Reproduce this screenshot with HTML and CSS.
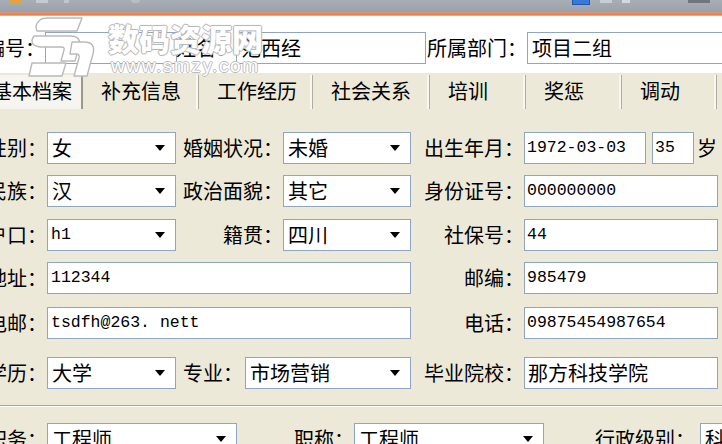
FILE: index.html
```html
<!DOCTYPE html>
<html lang="zh-CN">
<head>
<meta charset="utf-8">
<title>员工档案</title>
<link rel="stylesheet" href="styles.css">
</head>
<body>
<div class="titlebar">
  <span class="tb-ico tb-orange"></span>
  <span class="tb-ico tb-grey1"></span>
  <span class="tb-ico tb-grey2"></span>
  <span class="tb-ico tb-grey3"></span>
  <span class="tb-ico tb-blue"></span>
  <span class="tb-ico tb-grey4"></span>
  <span class="tb-ico tb-grey5"></span>
  <span class="tb-ico tb-dark"></span>
</div>
<div class="accent"></div>

<div class="header">
  <div class="row shift">
    <div class="lab l-id">编号：</div>
    <div class="box f-id"></div>
    <div class="lab l-name">姓名：</div>
    <div class="box f-name"><span class="cjk">范西经</span></div>
    <div class="lab l-dept">所属部门：</div>
    <div class="box f-dept"><span class="cjk">项目二组</span></div>
  </div>
</div>

<div class="tabs shift">
  <div class="tab tab-active t-basic">基本档案</div>
  <div class="tab t-116">补充信息</div>
  <div class="tab t-114">工作经历</div>
  <div class="tab t-117">社会关系</div>
  <div class="tab t-96">培训</div>
  <div class="tab t-96">奖惩</div>
  <div class="tab t-95">调动</div>
  <div class="tab t-rest"></div>
</div>

<div class="panel shift">
  <div class="row">
    <div class="lab c1">性别：</div>
    <div class="box sel s-short"><span class="cjk">女</span><span class="caret"></span></div>
    <div class="lab c2">婚姻状况：</div>
    <div class="box sel s-mid"><span class="cjk">未婚</span><span class="caret"></span></div>
    <div class="lab c3">出生年月：</div>
    <div class="box f-date"><span class="mono">1972-03-03</span></div>
    <div class="box f-age"><span class="mono">35</span></div>
    <div class="unit">岁</div>
  </div>
  <div class="row gap11">
    <div class="lab c1">民族：</div>
    <div class="box sel s-short"><span class="cjk">汉</span><span class="caret"></span></div>
    <div class="lab c2">政治面貌：</div>
    <div class="box sel s-mid"><span class="cjk">其它</span><span class="caret"></span></div>
    <div class="lab c3">身份证号：</div>
    <div class="box f-wide3"><span class="mono">000000000</span></div>
  </div>
  <div class="row gap12">
    <div class="lab c1">户口：</div>
    <div class="box sel s-short"><span class="mono">h1</span><span class="caret"></span></div>
    <div class="lab c2">籍贯：</div>
    <div class="box sel s-mid"><span class="cjk">四川</span><span class="caret"></span></div>
    <div class="lab c3">社保号：</div>
    <div class="box f-wide3"><span class="mono">44</span></div>
  </div>
  <div class="row gap11">
    <div class="lab c1">地址：</div>
    <div class="box f-wide1"><span class="mono">112344</span></div>
    <div class="lab c3">邮编：</div>
    <div class="box f-wide3"><span class="mono">985479</span></div>
  </div>
  <div class="row gap13">
    <div class="lab c1">电邮：</div>
    <div class="box f-wide1"><span class="mono">tsdfh@263. nett</span></div>
    <div class="lab c3">电话：</div>
    <div class="box f-wide3"><span class="mono">09875454987654</span></div>
  </div>
  <div class="row gap18">
    <div class="lab c1">学历：</div>
    <div class="box sel s-short"><span class="cjk">大学</span><span class="caret"></span></div>
    <div class="lab c2b">专业：</div>
    <div class="box sel s-major"><span class="cjk">市场营销</span><span class="caret"></span></div>
    <div class="lab c3">毕业院校：</div>
    <div class="box f-wide3"><span class="cjk">那方科技学院</span></div>
  </div>
  <div class="groove"></div>
  <div class="row gap16">
    <div class="lab c1">职务：</div>
    <div class="box sel s-job"><span class="cjk">工程师</span><span class="caret"></span></div>
    <div class="lab c-title">职称：</div>
    <div class="box sel s-job"><span class="cjk">工程师</span><span class="caret"></span></div>
    <div class="lab c-rank">行政级别：</div>
    <div class="box f-rank"><span class="cjk">科</span></div>
  </div>
</div>

<div class="watermark">
  <svg class="wm-logo" width="100" height="80" viewBox="0 0 100 80">
    <g fill="#ffffff" stroke="#b9b9b9" stroke-width="1.4" stroke-linejoin="round">
      <path d="M14 3 Q16 1 22 1 H56 L51 14 H11 Q8 8 14 3 Z"/>
      <path d="M8 19 H44 Q56 19 53 30 L49 44 H35 L38 33 Q39 30 35 30 H14 Q2 28 8 19 Z"/>
      <path d="M6 46 H40 L36 59 H3 Z"/>
      <path d="M46 25 H58 Q70 25 67 37 L61 59 H48 L53 41 Q54 37 50 37 H44 Z"/>
    </g>
  </svg>
  <div class="wm-title">数码资源网</div>
  <div class="wm-url">www.smzy.com</div>
</div>
</body>
</html>
```

FILE: styles.css
```css
html, body {
  margin: 0;
  padding: 0;
}

body {
  width: 722px;
  height: 444px;
  overflow: hidden;
  position: relative;
  background: #ece9d8;
  color: #000;
  font-family: "Noto Sans CJK SC", "Liberation Sans", sans-serif;
  font-size: 20px;
  line-height: 1;
}

/* top window strip */
.titlebar {
  height: 12px;
  background: linear-gradient(#a7aeb5, #9aa1a8);
  display: flex;
  align-items: flex-start;
}
.tb-ico { display: block; flex: none; }
.tb-orange { width: 12px; height: 4px; margin-left: 10px; background: #e6a23e; }
.tb-grey1 { width: 12px; height: 3px; margin-left: 14px; background: #c5cad0; }
.tb-grey2 { width: 5px; height: 3px; margin-left: 16px; background: #c0c5cb; }
.tb-grey3 { width: 9px; height: 3px; margin-left: 62px; background: #b9bec4; border-radius: 0 0 5px 5px; }
.tb-blue { width: 16px; height: 4px; margin-left: 432px; background: #3a78d8; border: 1px solid #2256b0; border-top: 0; }
.tb-grey4 { width: 12px; height: 3px; margin-left: 10px; background: #c9ced3; }
.tb-grey5 { width: 8px; height: 3px; margin-left: 10px; background: #d4d8dc; }
.tb-dark { width: 22px; height: 3px; margin-left: 58px; background: #6f767d; }

.accent {
  height: 4px;
  background: linear-gradient(#c99e8a, #ec7c48 60%, #f2b596);
}

.shift { margin-left: -12px; }

/* header row */
.header {
  background: #fff;
  height: 57px;
  box-sizing: border-box;
  padding-top: 16px;
}

.row {
  display: flex;
  align-items: center;
  height: 32px;
}

.lab {
  flex: none;
  display: flex;
  justify-content: flex-end;
  align-items: center;
  white-space: nowrap;
  height: 32px;
  box-sizing: border-box;
}

.box {
  flex: none;
  height: 32px;
  box-sizing: border-box;
  border: 1px solid #8ea6c1;
  background: #fff;
  display: flex;
  align-items: center;
  padding-left: 4px;
  white-space: nowrap;
  overflow: hidden;
}

.cjk {
  font-family: "Noto Sans CJK SC", sans-serif;
  font-size: 20px;
}

.mono {
  font-family: "Liberation Mono", "Noto Sans CJK SC", monospace;
  font-size: 16.5px;
  margin-left: -1px;
}

.sel {
  justify-content: space-between;
  padding-right: 10px;
}

.caret {
  flex: none;
  width: 0;
  height: 0;
  border-left: 5px solid transparent;
  border-right: 5px solid transparent;
  border-top: 6px solid #000;
}

/* header widths */
.l-id { width: 57px; }
.f-id { width: 132px; }
.l-name { width: 59px; }
.f-name { width: 190px; }
.l-dept { width: 101px; }
.f-dept { width: 240px; }

/* tabs */
.tabs {
  display: flex;
  height: 37px;
  background: #ece9d8;
}
.tab {
  flex: none;
  box-sizing: border-box;
  margin: 2px 0 1px;
  padding-left: 18px;
  padding-bottom: 3px;
  display: flex;
  align-items: center;
  white-space: nowrap;
  border-right: 1px solid #b0ad9f;
  box-shadow: inset -2px 0 0 #f8f7f2;
}
.tab-active {
  background: #f6f5ef;
  border-right: 2px solid #9b988c;
  box-shadow: none;
}
.t-basic { width: 95px; padding-left: 4px; }
.t-116 { width: 116px; }
.t-114 { width: 114px; }
.t-117 { width: 117px; }
.t-96 { width: 96px; }
.t-95 { width: 95px; }
.t-rest { width: 40px; border-right: 0; box-shadow: none; }

/* panel */
.panel {
  padding-top: 22px;
}
.gap11 { margin-top: 11px; }
.gap12 { margin-top: 12px; }
.gap13 { margin-top: 13px; }
.gap16 { margin-top: 16px; }
.gap18 { margin-top: 18px; }

.c1 { width: 59px; }
.c2 { width: 107px; }
.c2b { width: 69px; justify-content: flex-start; padding-left: 7px; }
.c3 { width: 113px; }
.c-title { width: 117px; }
.c-rank { width: 151px; }

.s-short { width: 129px; }
.s-mid { width: 128px; }
.s-major { width: 166px; }
.s-job { width: 190px; }

.f-date { width: 122px; padding-left: 3px; }
.f-age { width: 42px; margin-left: 6px; padding-left: 3px; }
.unit { margin-left: 3px; }
.f-wide3 { width: 194px; padding-left: 3px; }
.f-wide1 { width: 364px; }
.f-rank { width: 120px; margin-left: 5px; }

.groove {
  margin: 16px 0 0 12px;
  height: 1px;
  background: #aca899;
  border-bottom: 1px solid #fff;
}

/* watermark overlay */
.watermark {
  position: absolute;
  left: 0;
  top: 0;
  width: 300px;
  height: 95px;
  pointer-events: none;
}
.wm-logo {
  position: absolute;
  left: 26px;
  top: 17px;
}
.wm-title {
  position: absolute;
  left: 108px;
  top: 20px;
  font-family: "Noto Sans CJK SC", sans-serif;
  font-weight: 900;
  font-size: 31px;
  line-height: 36px;
  color: #fff;
  text-shadow: 1px 0 0 #b8b8b8, -1px 0 0 #b8b8b8, 0 1px 0 #b8b8b8, 0 -1px 0 #b8b8b8, 0 0 2px #a0a0a0;
  white-space: nowrap;
}
.wm-url {
  position: absolute;
  left: 111px;
  top: 55px;
  font-family: "Liberation Sans", sans-serif;
  font-size: 19px;
  line-height: 22px;
  letter-spacing: 1.6px;
  color: #fff;
  text-shadow: 1px 0 0 #bdbdbd, -1px 0 0 #bdbdbd, 0 1px 0 #bdbdbd, 0 -1px 0 #bdbdbd;
  white-space: nowrap;
}
```
